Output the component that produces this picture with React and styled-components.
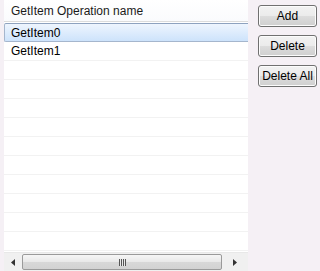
import React from 'react';
import styled, { createGlobalStyle } from 'styled-components';

const GlobalStyle = createGlobalStyle`
  html, body {
    margin: 0;
    padding: 0;
    background: #f5f0f5;
    font-family: 'Liberation Sans', Arial, sans-serif;
    font-size: 12px;
    color: #000;
  }
`;

const Page = styled.div`
  display: flex;
  width: 320px;
  height: 271px;
  padding-left: 4px;
  box-sizing: border-box;
  overflow: hidden;
`;

const ListView = styled.div`
  width: 244px;
  height: 271px;
  display: flex;
  flex-direction: column;
  background: #fff;
  overflow: hidden;
`;

const Header = styled.div`
  height: 22px;
  flex: none;
  display: flex;
  align-items: center;
  padding-left: 7px;
  background: linear-gradient(#ffffff, #fafbfd);
  border-bottom: 1px solid #dcdcdc;
  box-sizing: border-box;
  color: #1a1a1a;
`;

const Rows = styled.div`
  flex: 1;
  display: flex;
  flex-direction: column;
  overflow: hidden;
  padding-top: 1px;
`;

const Row = styled.div`
  height: 19px;
  flex: none;
  display: flex;
  align-items: center;
  padding-left: 7px;
  box-sizing: border-box;
  border-bottom: 1px solid #f2f2f2;
  ${(p) =>
    p.$selected &&
    `
    background: linear-gradient(#eef5fe, #cde3fb);
    border: 1px solid #a5b6cd;
    border-top-color: #8ea2bf;
    border-right: none;
    border-radius: 2px 0 0 2px;
    padding-left: 6px;
  `}
`;

const ScrollBar = styled.div`
  height: 19px;
  flex: none;
  display: flex;
  align-items: stretch;
  background: #f0f0f0;
  border-top: 1px solid #e8e8e8;
  box-sizing: border-box;
`;

const Arrow = styled.div`
  width: ${(p) => p.$w}px;
  display: flex;
  align-items: center;
  justify-content: center;
  flex: none;
`;

const Thumb = styled.div`
  flex: 1;
  margin: 1px 0;
  border: 1px solid #9a9a9a;
  border-radius: 2px;
  background: linear-gradient(#f6f6f6, #e8e8e8 50%, #d8d8d8 51%, #d2d2d2);
  display: flex;
  align-items: center;
  justify-content: center;
`;

const Grip = styled.div`
  width: 7px;
  height: 7px;
  background: repeating-linear-gradient(90deg, #555 0 1px, #e8e8e8 1px 2px);
`;

const Side = styled.div`
  display: flex;
  flex-direction: column;
  gap: 8px;
  padding: 5px 0 0 10px;
`;

const Button = styled.button`
  width: 59px;
  height: 22px;
  padding: 0;
  border: 1px solid #707070;
  border-radius: 3px;
  background: linear-gradient(#f2f2f2, #ebebeb 50%, #dddddd 51%, #cfcfcf);
  box-shadow: inset 0 0 0 1px #fcfcfc;
  font-family: 'Liberation Sans', Arial, sans-serif;
  font-size: 12px;
  color: #000;
`;

const rows = Array.from({ length: 13 }, (_, i) =>
  i === 0 ? 'GetItem0' : i === 1 ? 'GetItem1' : ''
);

export default function App() {
  return (
    <>
      <GlobalStyle />
      <Page>
        <ListView>
          <Header>GetItem Operation name</Header>
          <Rows>
            {rows.map((r, i) => (
              <Row key={i} $selected={i === 0}>
                {r}
              </Row>
            ))}
          </Rows>
          <ScrollBar>
            <Arrow $w={18}>
              <svg width="4" height="7" viewBox="0 0 4 7">
                <path d="M4 0 L0 3.5 L4 7 Z" fill="#333" />
              </svg>
            </Arrow>
            <Thumb>
              <Grip />
            </Thumb>
            <Arrow $w={26}>
              <svg width="4" height="7" viewBox="0 0 4 7">
                <path d="M0 0 L4 3.5 L0 7 Z" fill="#333" />
              </svg>
            </Arrow>
          </ScrollBar>
        </ListView>
        <Side>
          <Button>Add</Button>
          <Button>Delete</Button>
          <Button>Delete All</Button>
        </Side>
      </Page>
    </>
  );
}
